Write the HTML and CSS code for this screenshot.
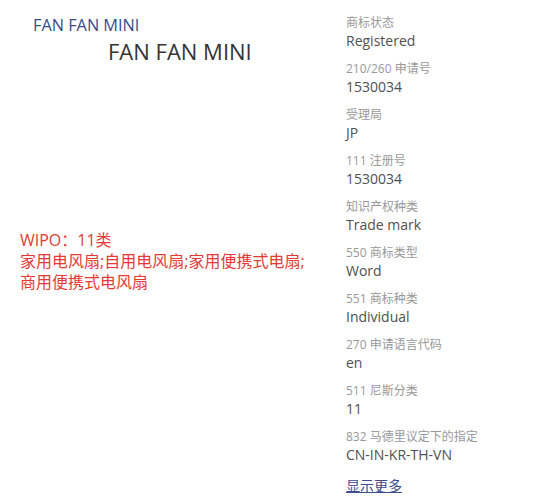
FILE: index.html
```html
<!DOCTYPE html>
<html lang="zh-CN">
<head>
  <meta charset="UTF-8">
  <title>FAN FAN MINI</title>
  <link rel="stylesheet" href="styles.css">
</head>
<body>
  <div class="page">
    <div class="left">
      <div class="brand">FAN FAN MINI</div>
      <div class="mark">FAN FAN MINI</div>
      <div class="goods">
        <div>WIPO：11类</div>
        <div>家用电风扇;自用电风扇;家用便携式电扇;<br>商用便携式电风扇</div>
      </div>
    </div>

    <div class="info">
      <div class="item">
        <div class="label">商标状态</div>
        <div class="value">Registered</div>
      </div>
      <div class="item">
        <div class="label">210/260 申请号</div>
        <div class="value">1530034</div>
      </div>
      <div class="item">
        <div class="label">受理局</div>
        <div class="value">JP</div>
      </div>
      <div class="item">
        <div class="label">111 注册号</div>
        <div class="value">1530034</div>
      </div>
      <div class="item">
        <div class="label">知识产权种类</div>
        <div class="value">Trade mark</div>
      </div>
      <div class="item">
        <div class="label">550 商标类型</div>
        <div class="value">Word</div>
      </div>
      <div class="item">
        <div class="label">551 商标种类</div>
        <div class="value">Individual</div>
      </div>
      <div class="item">
        <div class="label">270 申请语言代码</div>
        <div class="value">en</div>
      </div>
      <div class="item">
        <div class="label">511 尼斯分类</div>
        <div class="value">11</div>
      </div>
      <div class="item">
        <div class="label">832 马德里议定下的指定</div>
        <div class="value">CN-IN-KR-TH-VN</div>
      </div>
      <a class="more" href="#">显示更多</a>
    </div>
  </div>
</body>
</html>
```

FILE: styles.css
```css
body {
  margin: 0;
  font-family: 'Open Sans', 'Noto Sans CJK SC', sans-serif;
  background: #fff;
  color: #505050;
}
.page {
  display: flex;
}
.left {
  width: 326px;
  padding-left: 20px;
  box-sizing: border-box;
}
.brand {
  margin: 14px 0 0 13px;
  font-size: 16.3px;
  line-height: 22px;
  color: #3b4a8c;
}
.mark {
  margin: 1px 0 0 88px;
  font-size: 22px;
  line-height: 28px;
  color: #333;
}
.goods {
  margin-top: 165px;
  font-size: 16px;
  line-height: 21px;
  color: #e53935;
}
.info {
  padding: 14px 0 0 20px;
}
.item {
  margin-bottom: 9px;
}
.label {
  font-size: 12px;
  line-height: 17px;
  color: #999;
}
.value {
  font-size: 14px;
  line-height: 20px;
  color: #505050;
}
.more {
  display: inline-block;
  font-size: 14px;
  line-height: 20px;
  color: #3b4a8c;
}
```
